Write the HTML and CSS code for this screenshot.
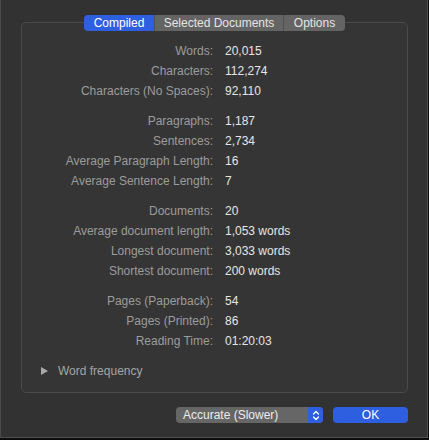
FILE: index.html
```html
<!DOCTYPE html>
<html lang="en">
<head>
  <meta charset="UTF-8" />
  <title>Project Statistics</title>
  <link rel="stylesheet" href="styles.css">
</head>
<body>
  <div class="window">
    <div class="tabs">
      <div class="tab active">Compiled</div>
      <div class="tab">Selected Documents</div>
      <div class="tab">Options</div>
    </div>

    <div class="group">
      <div class="stats">
        <div class="label">Words:</div><div class="value">20,015</div>
        <div class="label">Characters:</div><div class="value">112,274</div>
        <div class="label">Characters (No Spaces):</div><div class="value">92,110</div>
      </div>
      <div class="stats">
        <div class="label">Paragraphs:</div><div class="value">1,187</div>
        <div class="label">Sentences:</div><div class="value">2,734</div>
        <div class="label">Average Paragraph Length:</div><div class="value">16</div>
        <div class="label">Average Sentence Length:</div><div class="value">7</div>
      </div>
      <div class="stats">
        <div class="label">Documents:</div><div class="value">20</div>
        <div class="label">Average document length:</div><div class="value">1,053 words</div>
        <div class="label">Longest document:</div><div class="value">3,033 words</div>
        <div class="label">Shortest document:</div><div class="value">200 words</div>
      </div>
      <div class="stats">
        <div class="label">Pages (Paperback):</div><div class="value">54</div>
        <div class="label">Pages (Printed):</div><div class="value">86</div>
        <div class="label">Reading Time:</div><div class="value">01:20:03</div>
      </div>

      <div class="disclosure">
        <span class="triangle"></span>
        <span>Word frequency</span>
      </div>
    </div>

    <div class="footer">
      <div class="popup">
        <span class="popup-text">Accurate (Slower)</span>
        <span class="stepper">
          <svg width="8" height="11" viewBox="0 0 8 11">
            <path d="M1.5 4 L4 1.5 L6.5 4 M1.5 7 L4 9.5 L6.5 7" fill="none" stroke="#fff" stroke-width="1.3" stroke-linecap="round" stroke-linejoin="round"/>
          </svg>
        </span>
      </div>
      <button class="ok">OK</button>
    </div>
  </div>
</body>
</html>
```

FILE: styles.css
```css
* {
  box-sizing: border-box;
}

body {
  margin: 0;
  background: #0c0c0c;
  font-family: "Liberation Sans", Arial, sans-serif;
  font-size: 12px;
  width: 429px;
  height: 440px;
}

.window {
  width: 428px;
  height: 438px;
  background: #323232;
  border-left: 1px solid #4a4a4a;
  border-right: 1px solid #4a4a4a;
  border-bottom: 1px solid #505050;
  padding-top: 15px;
}

/* Segmented control */
.tabs {
  display: flex;
  justify-content: center;
  position: relative;
  z-index: 1;
  height: 16px;
  margin-left: 1px;
}

.tab {
  background: #646464;
  color: #e4e4e4;
  line-height: 16px;
  font-size: 12px;
  white-space: nowrap;
  text-align: center;
  border-left: 1px solid #505050;
}

.tab:first-child {
  border-left: none;
  border-radius: 4px 0 0 4px;
}

.tab:last-child {
  border-radius: 0 4px 4px 0;
}

.tab.active {
  background: #2d5fe0;
  color: #fff;
  width: 70px;
}

.tab:nth-child(2) {
  width: 129px;
}

.tab:nth-child(3) {
  width: 62px;
}

/* Group box */
.group {
  margin: -9px 19px 0 20px;
  height: 371px;
  border: 1px solid #4a4a4a;
  border-radius: 5px;
  background: #353535;
  padding-top: 18px;
}

.stats {
  display: grid;
  grid-template-columns: 191px auto;
  column-gap: 12px;
  line-height: 20px;
  margin-bottom: 10px;
}

.label {
  text-align: right;
  color: #9c9c9c;
}

.value {
  color: #e6e6e6;
}

.disclosure {
  display: flex;
  align-items: center;
  gap: 10px;
  margin: 10px 0 0 19px;
  color: #a6a6a6;
  line-height: 20px;
}

.triangle {
  width: 0;
  height: 0;
  border-top: 4px solid transparent;
  border-bottom: 4px solid transparent;
  border-left: 7px solid #a8a8a8;
}

/* Bottom buttons */
.footer {
  display: flex;
  justify-content: flex-end;
  gap: 10px;
  padding: 14px 19px 0 0;
}

.popup {
  display: flex;
  width: 147px;
  height: 16px;
  background: #666;
  border-radius: 4px;
  overflow: hidden;
}

.popup-text {
  flex: 1;
  color: #ececec;
  font-size: 12px;
  line-height: 16px;
  padding-left: 7px;
}

.stepper {
  width: 15px;
  background: #2d5fe0;
  display: flex;
  align-items: center;
  justify-content: center;
}

.ok {
  width: 75px;
  height: 16px;
  border: none;
  border-radius: 4px;
  background: #2d5fe0;
  color: #fff;
  font-family: inherit;
  font-size: 12px;
  line-height: 16px;
  padding: 0;
}
```
